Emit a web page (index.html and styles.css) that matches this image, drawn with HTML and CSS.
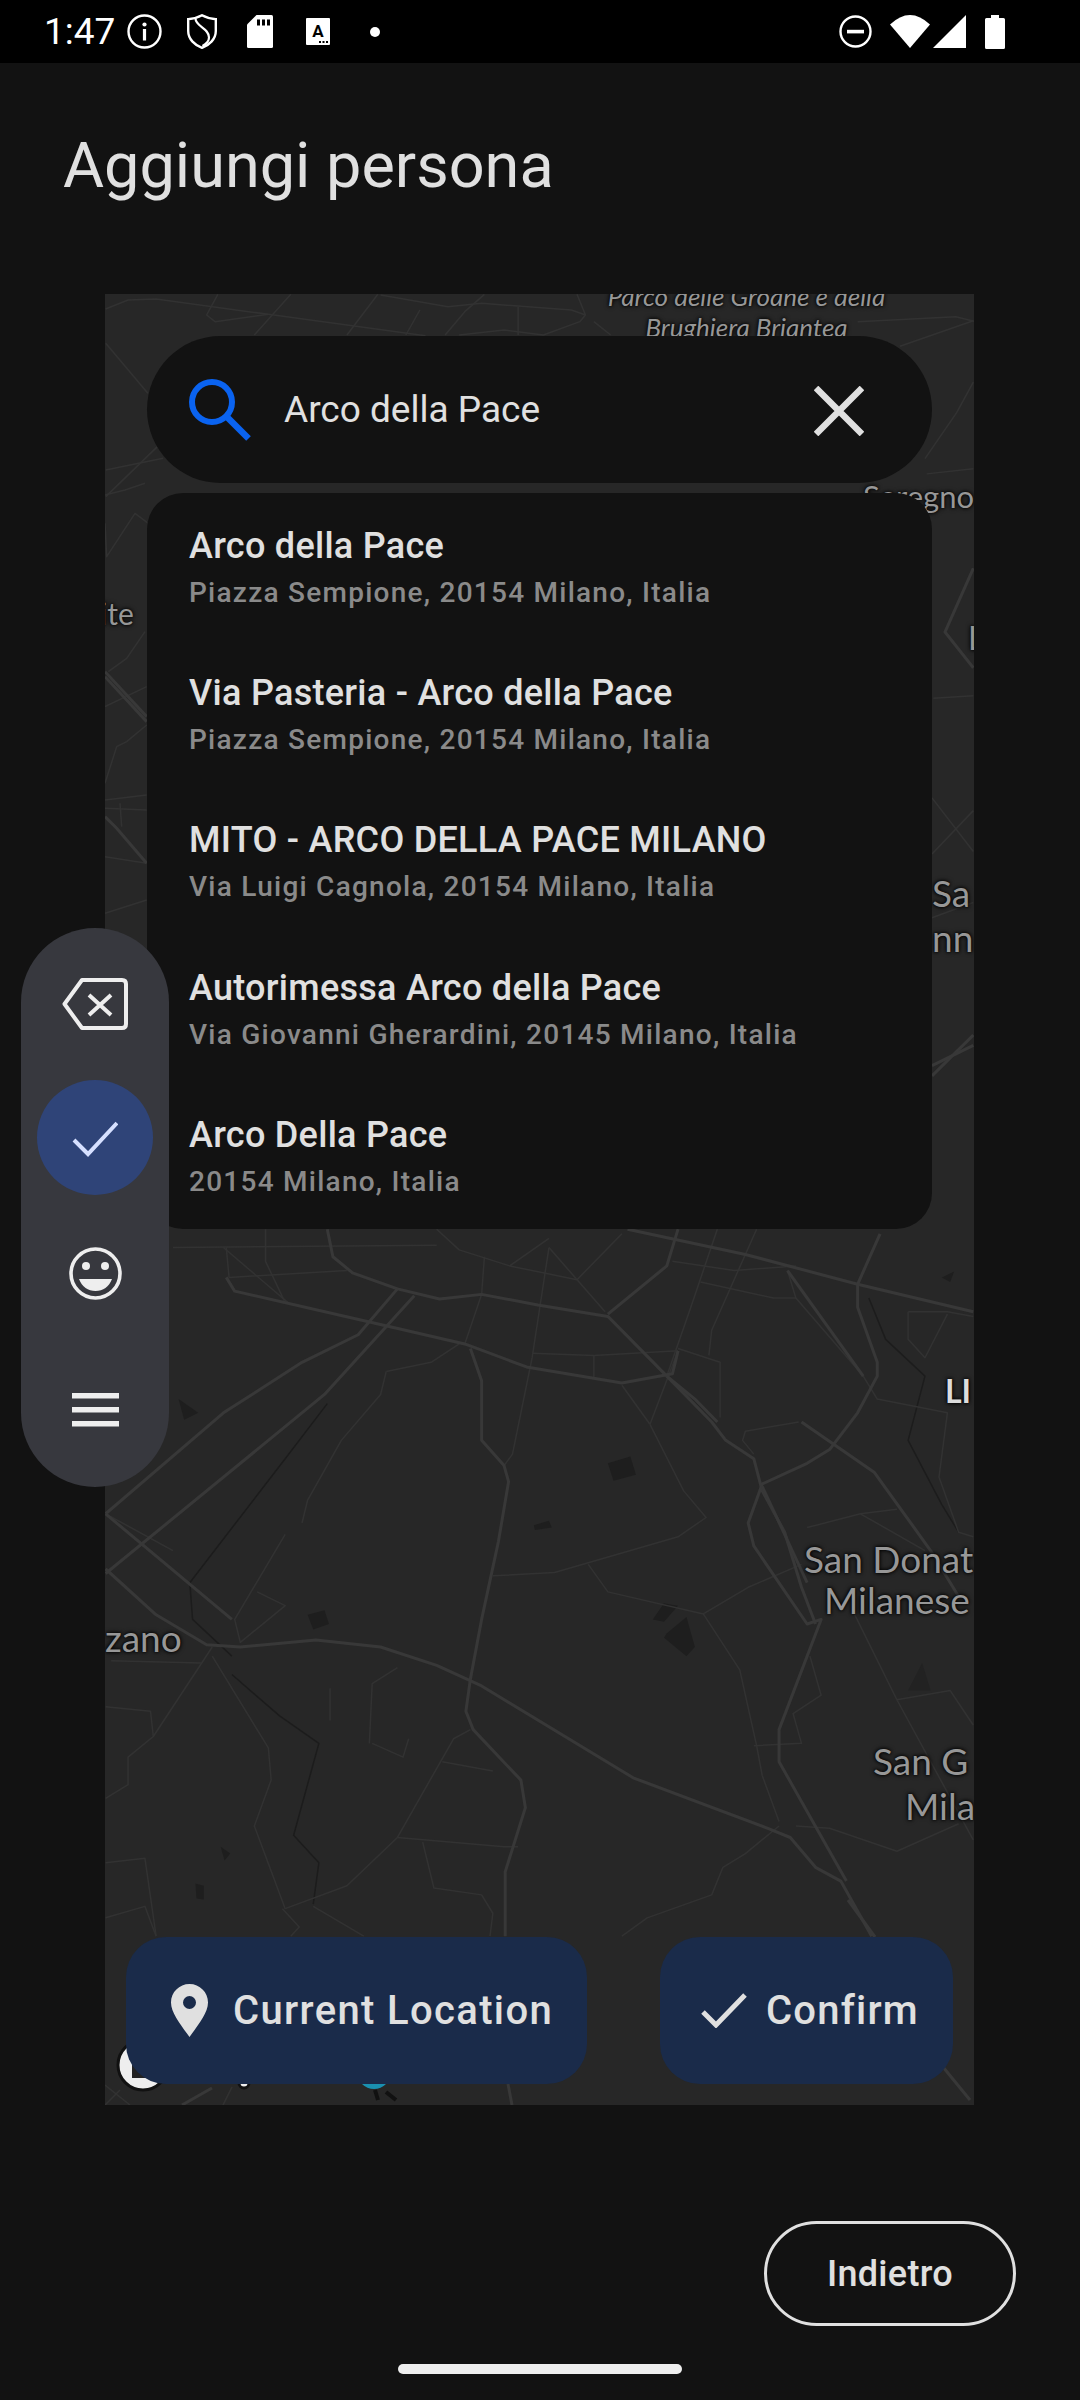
FILE: index.html
```html
<!DOCTYPE html>
<html lang="it">
<head>
<meta charset="utf-8">
<title>Aggiungi persona</title>
<link rel="stylesheet" href="styles.css">
</head>
<body>
<div class="screen">
  <header class="status">
    <div class="status-left">
      <span class="time">1:47</span>
      <svg class="ic-info" viewBox="0 0 35 35"><circle cx="17.5" cy="17.5" r="16" fill="none" stroke="#fff" stroke-width="2.4"/><circle cx="17.5" cy="10.5" r="2.1" fill="#fff"/><rect x="15.9" y="15" width="3.2" height="11.5" fill="#fff"/></svg>
      <svg class="ic-shield" viewBox="0 0 30 35"><path d="M15 1.3C19.5 3.8 24.5 4.8 28.8 5.2V17C28.8 25 22.5 31 15 33.8 7.5 31 1.2 25 1.2 17V5.2C5.5 4.8 10.5 3.8 15 1.3Z" fill="none" stroke="#fff" stroke-width="2.4"/><path d="M8.5 4.5C8.5 12.5 22 14 22 23.5 22 27 19 30 15.5 32" fill="none" stroke="#fff" stroke-width="2.2"/></svg>
      <svg class="ic-sd" viewBox="0 0 26 33"><path d="M9.5 0H24.5Q26 0 26 1.5V31.5Q26 33 24.5 33H1.5Q0 33 0 31.5V9.5Z" fill="#fff"/><rect x="10" y="4.5" width="3" height="6" fill="#000"/><rect x="15" y="4.5" width="3" height="6" fill="#000"/><rect x="20" y="4.5" width="3" height="6" fill="#000"/></svg>
      <svg class="ic-a" viewBox="0 0 24 27"><rect width="24" height="27" rx="1" fill="#fff"/><text x="12" y="19" text-anchor="middle" class="a-letter">A</text><rect x="13" y="23" width="2" height="2" fill="#000"/><rect x="16.5" y="23" width="2" height="2" fill="#000"/><rect x="20" y="23" width="2" height="2" fill="#000"/></svg>
      <span class="dot"></span>
    </div>
    <div class="status-right">
      <svg class="ic-dnd" viewBox="0 0 33 33"><circle cx="16.5" cy="16.5" r="15" fill="none" stroke="#fff" stroke-width="2.4"/><rect x="8" y="14.8" width="17" height="3.6" fill="#fff"/></svg>
      <svg class="ic-wifi" viewBox="0 0 40 33"><path d="M0 9.5Q20-9.5 40 9.5L20 33Z" fill="#fff"/></svg>
      <svg class="ic-signal" viewBox="0 0 33 33"><path d="M33 0V33H0Z" fill="#fff"/></svg>
      <svg class="ic-batt" viewBox="0 0 20 34"><path d="M6 0H14V3H18.5Q20 3 20 4.5V32.5Q20 34 18.5 34H1.5Q0 34 0 32.5V4.5Q0 3 1.5 3H6Z" fill="#fff"/></svg>
    </div>
  </header>

  <h1 class="title">Aggiungi persona</h1>

  <section class="map">
    <svg class="roads" viewBox="105 294 869 1811" width="869" height="1811">
      <g transform="matrix(.5612 0 0 .4591 100 1220)">
        <g class="parks">
          <path d="M905 530L945 515 955 555 915 568Z"/><path d="M773 665L800 655 805 670 775 675Z"/><path d="M1005 835L1030 840 1005 875 985 870Z"/><path d="M1010 900L1045 865 1060 930 1045 950 1005 910Z"/><path d="M370 860L400 850 408 880 380 892Z"/><path d="M140 390L175 420 150 435Z"/><path d="M215 1365L232 1380 222 1395Z"/><path d="M170 1445L185 1450 185 1480 172 1478Z"/><path class="park-soft" d="M1440 1025L1465 965 1480 1025Z"/><path d="M1500 125L1522 112 1515 135Z"/>
        </g>
        <g class="road-dark">
          <path d="M160 790L165 870 235 950"/><path d="M405 400L330 520 160 790"/><path d="M1370 170L1400 260 1470 340 1440 480 1500 620 1530 680"/><path d="M235 990L320 1080 390 1140 345 1340 390 1400 380 1490"/>
        </g>
        <g class="road-thin">
          <path d="M130 60L600 55"/><path d="M225 60L230 125 440 110"/><path d="M295 20L295 90 330 180"/><path d="M685 80L680 162 650 270"/><path d="M800 60L770 300 735 510 720 535"/><path d="M800 60L900 200"/><path d="M800 40L730 100 850 130 930 30"/><path d="M600 20L640 65 730 100"/><path d="M1100 20L1050 200 1010 340"/><path d="M1170 20L1090 240 1085 295"/><path d="M1020 90L1130 110 1240 100"/><path d="M1070 135L1200 170 1240 170"/><path d="M1225 110L1240 170 1360 340 1385 390 1510 420 1495 560 1530 680 1556 690"/><path d="M1030 280L1105 310 1105 430"/><path d="M880 295L1030 285"/><path d="M770 290L880 295 880 345"/><path d="M980 445L930 360"/><path d="M980 445L1030 285"/><path d="M980 445L1040 590 1080 648 1030 690 810 768 700 775"/><path d="M870 750L905 810 1075 858 1155 800 1250 750"/><path d="M1075 858L1140 980 1170 1145 1180 1210 1210 1310"/><path d="M1165 1145L1250 1140 1235 1075 1285 1035 1265 950"/><path d="M480 1140L485 1010 530 975"/><path d="M410 1020L410 1090"/><path d="M485 1140L540 1170 550 1130"/><path d="M330 685L240 870 250 920 330 840 280 810"/><path d="M360 660L370 610 430 480 500 380 510 330"/><path d="M510 330L590 310 640 270"/><path d="M200 930L95 1125 50 1170 50 1230 10 1260"/><path d="M200 950L300 1150 305 1220 275 1320 330 1500"/><path d="M330 1500L440 1450 530 1345 630 1130 660 1110"/><path d="M530 1345L720 1365 745 1365"/><path d="M575 1355L595 1455 680 1470 700 1510 695 1560"/><path d="M1210 1320L1150 1380 1110 1410 1090 1470 975 1520 930 1560"/><path d="M1240 1320L1300 1325 1420 1375 1530 1315"/><path d="M1345 860L1420 1045 1556 1350"/><path d="M1420 1045L1515 1025 1556 1100"/><path d="M1260 670L1355 640 1470 720"/><path d="M1355 640L1420 630"/><path d="M1245 440L1150 460 1145 480 1165 510"/><path d="M1440 200L1510 200 1556 210"/><path d="M1440 200L1440 260 1470 300 1510 205"/><path d="M220 60L335 180"/><path d="M10 1400L80 1390 100 1560"/><path d="M10 1520L80 1495 100 1560"/><path d="M380 1495L470 1560"/><path d="M325 1500L355 1540 340 1560"/><path d="M130 720L10 640"/><path d="M10 1060L90 1070 95 1125"/><path d="M20 960L180 965"/><path d="M610 1180L700 1200"/>
        </g>
        <g class="road-main">
          <path d="M940 20L1150 75 1350 140 1556 200"/>
          <path d="M1030 20L1010 100 905 205"/>
          <path d="M405 20L415 80 450 115 530 150 605 172 680 162 780 185 905 210 1010 340 1090 440 1115 480 1165 520 1180 590 1220 680 1250 800 1275 880"/>
          <path d="M660 280L680 350 680 480 720 535 728 570 710 700 680 870 660 1000 652 1070 665 1110 750 1220 758 1280 722 1420 722 1560"/>
          <path d="M10 760L100 860 190 925 250 930 385 915 500 930 600 970 680 1015 950 1215 1190 1325 1230 1345 1275 1410 1320 1440 1375 1560"/>
          <path d="M1390 30L1350 140 1350 190 1385 310 1385 340 1350 420 1300 500 1260 530 1180 575 1155 660 1165 710 1260 880 1285 870 1210 1110 1210 1180 1270 1310 1330 1440"/>
          <path d="M10 640L220 420 360 310 460 250 530 150"/>
          <path d="M10 770L400 380 560 165"/>
          <path d="M225 125L240 155 490 225 650 270 760 320 930 355 1020 335 1030 285"/>
          <path d="M1225 110L1360 340"/>
          <path d="M1250 440L1380 550 1480 720 1530 820"/>
          <path d="M1010 340L1060 390 1100 440"/>
          <path d="M1180 580L1260 790"/>
          <path d="M10 640L235 870"/>
        </g>
      </g>
      <g transform="matrix(.5612 0 0 .3333 100 285)" class="road-thin">
        <path d="M10 72L50 45 100 42 300 88 580 152"/><path d="M340 28L275 150"/><path d="M210 28L190 90 205 110 300 88"/><path d="M495 28L440 150"/><path d="M570 75L545 150"/><path d="M685 28L650 80 615 150"/><path d="M500 30L620 65 680 55 840 75 865 90 855 110 790 150 720 135 640 150"/><path d="M850 28L865 90"/><path d="M880 110L910 150"/><path d="M745 65L745 150"/><path d="M1350 110L1525 95 1560 110"/>
      </g>
      <g transform="matrix(.3333 0 0 .3333 100 480)" class="road-thin">
        <path d="M15 130L20 230 105 100 145 130"/><path d="M15 45L75 30 135 10"/><path d="M135 455L80 535 25 575"/><path d="M15 680L140 620"/><path d="M15 910L50 800 80 785 140 735"/><path d="M15 960L140 945"/><path d="M15 985L140 990"/><path d="M60 970L65 1040"/><path d="M15 1130L140 1150"/><path d="M15 1300L140 1260"/>
      </g>
      <g transform="matrix(.3333 0 0 .3333 100 480)" class="road-main">
        <path d="M15 575L140 710"/><path d="M15 590L140 725"/><path d="M15 1010L50 1045 140 1150"/>
      </g>
      <g transform="matrix(.3826 0 0 .3333 100 290)" class="road-thin">
        <path d="M15 160L125 310"/><path d="M15 620L150 470"/><path d="M15 540L165 505"/>
      </g>
      <g transform="matrix(.3333 0 0 .5102 800 280)" class="road-thin">
        <path d="M375 350L470 260 520 200"/><path d="M300 130L520 80"/><path d="M520 370L380 380"/><path d="M400 820L520 815"/><path d="M396 1250L520 1220"/><path d="M396 1015L520 1120"/><path d="M396 1125L520 1040"/>
      </g>
      <g transform="matrix(.3333 0 0 .5102 800 280)" class="road-main">
        <path d="M520 565L435 690 520 760"/><path d="M396 1560L520 1480"/><path d="M396 1540L520 1500"/>
      </g>
      <g class="road-main">
        <path d="M848 1900L875 1937"/><path d="M943 2067L970 2100"/><path d="M508 2084L512 2105"/><path d="M212 2088L182 2105"/>
      </g>
      <g class="road-thin">
        <path d="M232 2087L223 2105"/><path d="M105 2085L130 2105"/><path d="M120 2090L105 2105"/>
      </g>
      <circle class="logo-ring" cx="143" cy="2065" r="25"/>
      <path class="logo-mark" d="M132 2050L160 2078H132Z"/>
      <circle class="logo-dot" cx="244" cy="2083" r="5"/>
      <circle class="logo-teal" cx="374" cy="2072" r="17"/>
      <path class="logo-tail" d="M375 2090L378 2100M386 2092L396 2100"/>
    </svg>

    <span class="lbl lbl-parco">Parco delle Groane e della<br>Brughiera Briantea</span>
    <span class="lbl lbl-seregno">Seregno</span>
    <span class="lbl lbl-te">ite</span>
    <span class="lbl lbl-l">L</span>
    <span class="lbl lbl-sa">Sa</span>
    <span class="lbl lbl-nn">nn</span>
    <span class="lbl lbl-li">LI</span>
    <span class="lbl lbl-donato">San Donat</span>
    <span class="lbl lbl-milanese">Milanese</span>
    <span class="lbl lbl-zano">zano</span>
    <span class="lbl lbl-giu">San G</span>
    <span class="lbl lbl-mila">Mila</span>

    <div class="search">
      <svg class="ic-search" viewBox="0 0 62 62"><circle cx="23" cy="23" r="20" fill="none" stroke="#0a63f0" stroke-width="6"/><path d="M38 38L59.5 59.5" stroke="#0a63f0" stroke-width="6.5" fill="none"/></svg>
      <span class="search-text">Arco della Pace</span>
      <svg class="ic-close" viewBox="0 0 50 50"><path d="M2 2L48 48M48 2L2 48" stroke="#e0e0e0" stroke-width="6.5" fill="none"/></svg>
    </div>

    <ul class="results">
      <li class="result"><span class="r-title">Arco della Pace</span><span class="r-sub">Piazza Sempione, 20154 Milano, Italia</span></li>
      <li class="result"><span class="r-title">Via Pasteria - Arco della Pace</span><span class="r-sub">Piazza Sempione, 20154 Milano, Italia</span></li>
      <li class="result"><span class="r-title">MITO - ARCO DELLA PACE MILANO</span><span class="r-sub">Via Luigi Cagnola, 20154 Milano, Italia</span></li>
      <li class="result"><span class="r-title">Autorimessa Arco della Pace</span><span class="r-sub">Via Giovanni Gherardini, 20145 Milano, Italia</span></li>
      <li class="result"><span class="r-title">Arco Della Pace</span><span class="r-sub">20154 Milano, Italia</span></li>
    </ul>

    <div class="map-actions">
      <button class="map-btn btn-loc">
        <svg class="ic-pin" viewBox="0 0 37 53"><path fill-rule="evenodd" d="M18.5 0C28.7 0 37 8.200 37 18.500 37 29 27 41 18.500 53 10 41 0 29 0 18.500 0 8.200 8.300 0 18.500 0ZM18.500 12A6.500 6.500 0 1 0 18.500 25 6.500 6.500 0 1 0 18.500 12Z" fill="#e0e0e0"/></svg>
        <span>Current Location</span>
      </button>
      <button class="map-btn btn-ok">
        <svg class="ic-tick" viewBox="0 0 46 35"><path d="M2 19L15 32 44 2" stroke="#e0e0e0" stroke-width="5" fill="none"/></svg>
        <span>Confirm</span>
      </button>
    </div>
  </section>

  <aside class="keys">
    <div class="key">
      <svg class="ic-back" viewBox="0 0 66 52"><path d="M20 2H60Q64 2 64 6V46Q64 50 60 50H20L2.500 26Z" fill="none" stroke="#eee" stroke-width="4" stroke-linejoin="round"/><path d="M27 17L49 37M49 17L27 37" stroke="#eee" stroke-width="4" fill="none"/></svg>
    </div>
    <div class="key key-on">
      <svg class="ic-check" viewBox="0 0 46 36"><path d="M2 19L16 33 45 2" stroke="#d6e0ff" stroke-width="4" fill="none"/></svg>
    </div>
    <div class="key key-smile">
      <svg class="ic-smile" viewBox="0 0 53 53"><circle cx="26.500" cy="26.500" r="24.500" fill="none" stroke="#eee" stroke-width="3.600"/><circle cx="17" cy="19" r="4" fill="#eee"/><circle cx="36" cy="19" r="4" fill="#eee"/><path d="M10 32H43C40 40 34 44 26.500 44S13 40 10 32Z" fill="#eee"/></svg>
    </div>
    <div class="key">
      <svg class="ic-menu" viewBox="0 0 47 34"><rect y="0" width="47" height="5.500" fill="#eee"/><rect y="14" width="47" height="5.500" fill="#eee"/><rect y="28" width="47" height="5.500" fill="#eee"/></svg>
    </div>
  </aside>

  <footer class="foot">
    <button class="back">Indietro</button>
    <div class="home-row"><span class="home"></span></div>
  </footer>
</div>
</body>
</html>
```
FILE: styles.css
```css
* { box-sizing: border-box; }
html, body { margin: 0; padding: 0; background: #121212; }
body { font-family: Roboto, "Noto Sans", sans-serif; }
.screen { position: relative; width: 1080px; height: 2400px; overflow: hidden; background: #121212; display: flex; flex-direction: column; }

.status { height: 63px; background: #000; display: flex; justify-content: space-between; align-items: center; color: #fff; flex: none; }
.status-left { display: flex; align-items: center; padding-left: 44px; }
.status-right { display: flex; align-items: center; padding-right: 75px; }
.time { font-size: 37px; line-height: 63px; width: 83px; font-weight: 400; }
.status svg { display: block; flex: none; }
.ic-info { width: 35px; height: 35px; margin-right: 25px; }
.ic-shield { width: 30px; height: 35px; margin-right: 30px; }
.ic-sd { width: 26px; height: 33px; margin-right: 33px; }
.ic-a { width: 24px; height: 27px; margin-right: 40px; }
.a-letter { font: 700 17px Roboto, sans-serif; fill: #000; }
.dot { width: 10px; height: 10px; border-radius: 50%; background: #fff; }
.ic-dnd { width: 33px; height: 33px; margin-right: 18px; }
.ic-wifi { width: 40px; height: 33px; margin-right: 3px; }
.ic-signal { width: 33px; height: 33px; margin-right: 19px; }
.ic-batt { width: 20px; height: 34px; }

.title { margin: 0; flex: none; height: 231px; padding: 71px 0 0 63px; font-size: 63px; line-height: 64px; font-weight: 400; color: #e0e0e0; }

.map { position: relative; flex: none; width: 869px; height: 1811px; margin-left: 105px; background: #272727; overflow: hidden; }
.roads { display: block; position: absolute; left: 0; top: 0; }
.roads path { fill: none; vector-effect: non-scaling-stroke; stroke-linejoin: round; }
.roads .parks path { fill: #1e1e1e; stroke: none; }
.roads .parks .park-soft { fill: #222; }
.road-main path { stroke: #383838; stroke-width: 3px; }
.road-thin path { stroke: #323232; stroke-width: 1.5px; }
.road-dark path { stroke: #1c1c1c; stroke-width: 1.5px; }
.logo-ring { fill: #eee; stroke: #111; stroke-width: 3; }
.roads .logo-mark { fill: #222; }
.logo-dot { fill: #eee; stroke: #111; stroke-width: 3; }
.logo-teal { fill: #1a90b0; }
.roads .logo-tail { stroke: #111; stroke-width: 4; }

.lbl { position: absolute; white-space: nowrap; color: #979797; text-shadow: 0 0 5px #000, 0 0 3px #000; font-family: Lato, Roboto, sans-serif; font-size: 37px; line-height: 41px; }
.lbl-parco { left: 502px; top: -13px; width: 279px; font-size: 26px; line-height: 31px; font-style: italic; text-align: center; }
.lbl-seregno { left: 758px; top: 185px; font-size: 31px; line-height: 34px; }
.lbl-te { left: -5px; top: 302px; font-size: 30px; line-height: 34px; }
.lbl-l { left: 863px; top: 326px; font-size: 32px; line-height: 36px; }
.lbl-sa { left: 827px; top: 578px; }
.lbl-nn { left: 827px; top: 623px; }
.lbl-li { left: 840px; top: 1079px; font-size: 32px; line-height: 36px; color: #ddd; font-weight: 700; }
.lbl-donato { left: 699px; top: 1244px; }
.lbl-milanese { left: 719px; top: 1285px; }
.lbl-zano { left: 0; top: 1323px; }
.lbl-giu { left: 768px; top: 1446px; }
.lbl-mila { left: 800px; top: 1491px; }

.search { position: absolute; left: 42px; top: 42px; width: 785px; height: 147px; border-radius: 74px; background: #121212; display: flex; align-items: center; padding-left: 42px; }
.ic-search { width: 62px; height: 62px; flex: none; margin-right: 33px; }
.search-text { font-size: 37px; color: #e0e0e0; flex: 1; }
.ic-close { width: 50px; height: 50px; flex: none; margin: 2px 68px 0 0; }

.results { position: absolute; left: 42px; top: 199px; width: 785px; margin: 0; padding: 0; list-style: none; background: #121212; border-radius: 36px; }
.result { height: 147.200px; display: flex; flex-direction: column; justify-content: center; padding: 3px 0 0 42px; }
.r-title { font-size: 36px; line-height: 50px; font-weight: 500; color: #e0e0e0; letter-spacing: 0.28px; }
.r-sub { font-size: 28px; line-height: 44px; font-weight: 500; color: #8a8a8a; letter-spacing: 1.25px; }

.map-actions { position: absolute; left: 21px; right: 21px; bottom: 21px; display: flex; justify-content: space-between; }
.map-btn { height: 147px; border: 0; border-radius: 40px; background: #1a2b4a; color: #e0e0e0; font-family: Roboto, sans-serif; font-size: 40px; font-weight: 500; display: flex; align-items: center; padding: 0; }
.btn-loc { width: 461px; padding-left: 45px; letter-spacing: 1.35px; }
.btn-ok { width: 293px; padding-left: 41px; letter-spacing: 1.2px; }
.ic-pin { width: 37px; height: 53px; margin-right: 25px; flex: none; }
.ic-tick { width: 46px; height: 35px; margin-right: 19px; flex: none; }

.keys { position: absolute; left: 21px; top: 928px; width: 148px; height: 559px; border-radius: 74px; background: #37383e; display: flex; flex-direction: column; align-items: center; padding-top: 8px; }
.key { flex: none; width: 116px; height: 135px; display: flex; align-items: center; justify-content: center; }
.key-on { height: 115px; margin: 9px 0 11px; border-radius: 50%; background: #2f4478; padding-top: 2px; }
.key-smile + .key { padding-top: 3px; }
.ic-back { width: 66px; height: 52px; }
.ic-check { width: 46px; height: 36px; }
.ic-smile { width: 53px; height: 53px; }
.ic-menu { width: 47px; height: 34px; }

.foot { flex: 1; display: flex; flex-direction: column; padding-top: 116px; }
.back { align-self: flex-end; margin-right: 64px; width: 252px; height: 105px; border: 3px solid #e0e0e0; border-radius: 53px; background: transparent; color: #e0e0e0; font-family: Roboto, sans-serif; font-size: 36px; font-weight: 500; letter-spacing: 0.3px; padding: 0; }
.home-row { display: flex; justify-content: center; margin-top: 38px; }
.home { width: 284px; height: 10px; border-radius: 5px; background: #eee; }
```
